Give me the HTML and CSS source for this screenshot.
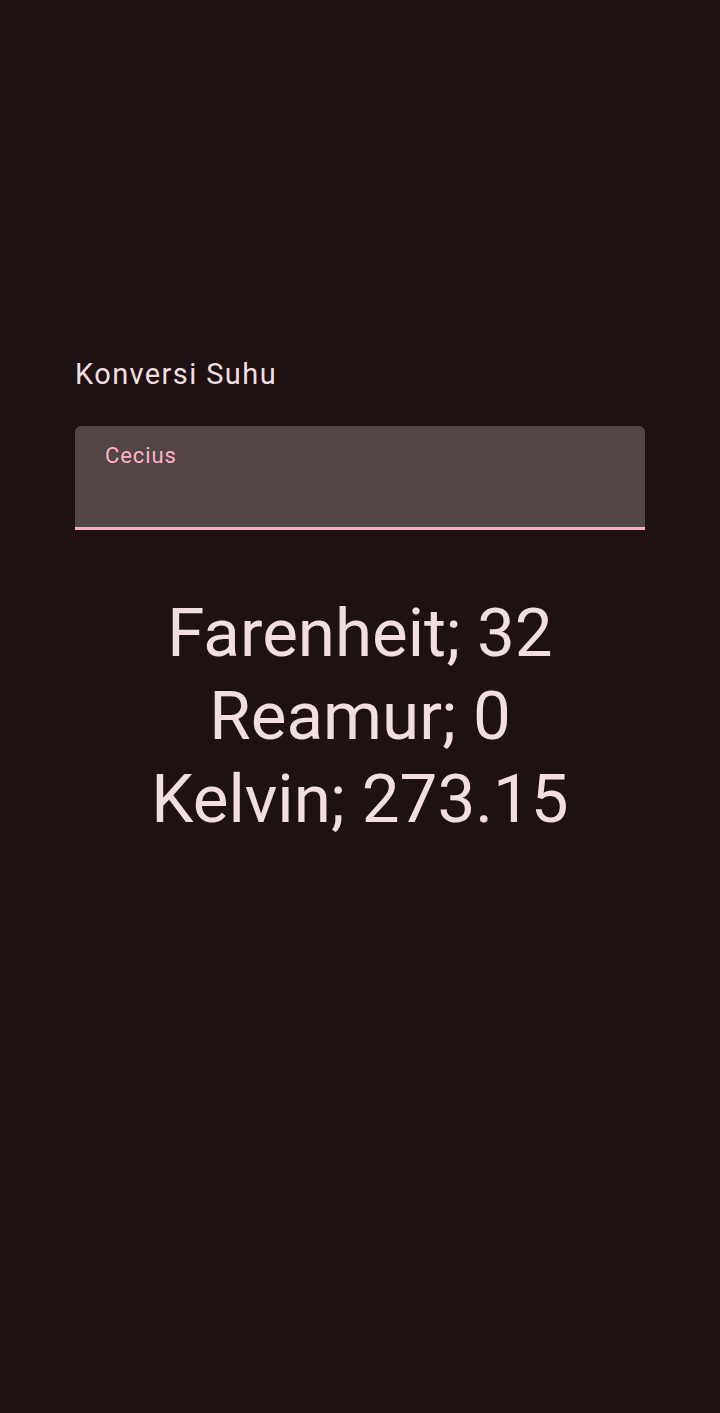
FILE: index.html
```html
<!DOCTYPE html>
<html lang="id">
<head>
<meta charset="utf-8">
<title>Konversi Suhu</title>
<link rel="stylesheet" href="styles.css">
</head>
<body>
<main class="screen">
  <h1 class="title">Konversi Suhu</h1>
  <div class="field">
    <label class="field-label" for="celsius">Cecius</label>
    <input class="field-input" id="celsius" type="text" value="">
  </div>
  <div class="results">
    <p class="result">Farenheit; 32</p>
    <p class="result">Reamur; 0</p>
    <p class="result">Kelvin; 273.15</p>
  </div>
</main>
</body>
</html>
```
FILE: styles.css
```css
html, body {
  margin: 0;
  padding: 0;
  background: #1d1112;
  height: 100%;
}
body {
  font-family: Roboto, "Noto Sans", sans-serif;
  color: #f2dde0;
}
.screen {
  padding: 355px 75px 0;
  display: flex;
  flex-direction: column;
}
.title {
  margin: 0;
  font-size: 29px;
  font-weight: 400;
  line-height: 38px;
  letter-spacing: 1.4px;
}
.field {
  margin-top: 33px;
  height: 101px;
  background: #524546;
  border-radius: 6px 6px 0 0;
  border-bottom: 3px solid #ffb1c4;
  display: flex;
  flex-direction: column;
  padding: 0 30px;
}
.field-label {
  margin-top: 18px;
  font-size: 22px;
  line-height: 24px;
  letter-spacing: 0.9px;
  color: #ffb1c8;
}
.field-input {
  background: transparent;
  border: none;
  outline: none;
  font-family: inherit;
  font-size: 22px;
  color: #f2dde0;
  padding: 0;
  margin-top: 6px;
}
.results {
  margin-top: 62px;
  display: flex;
  flex-direction: column;
  align-items: center;
}
.result {
  margin: 0;
  font-size: 67.3px;
  line-height: 83px;
  font-weight: 400;
}
```
